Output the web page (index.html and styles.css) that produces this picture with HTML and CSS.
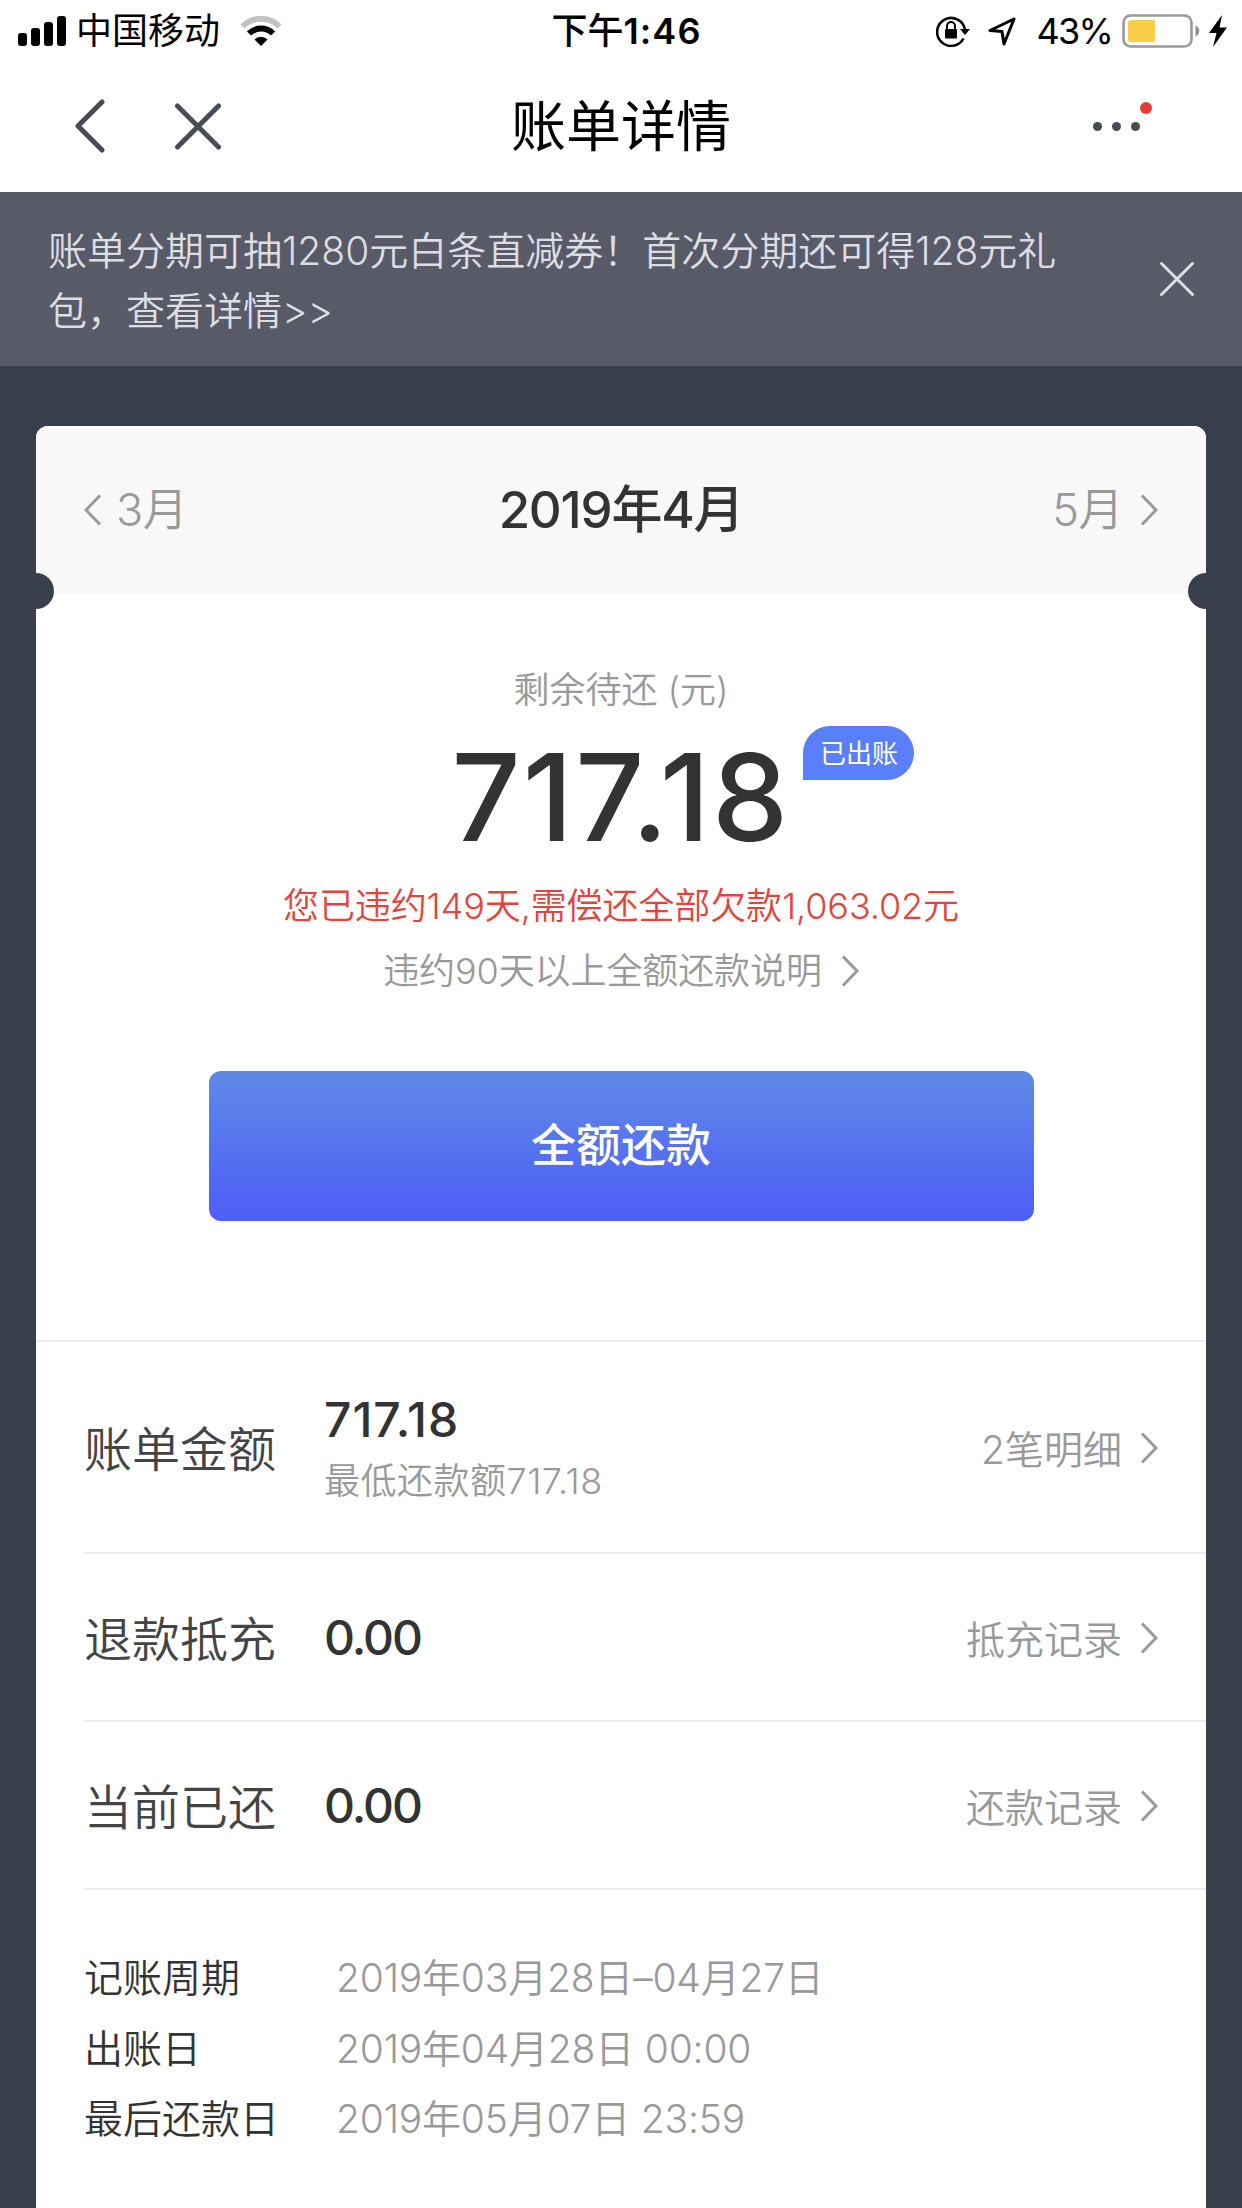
FILE: index.html
```html
<!DOCTYPE html>
<html lang="zh-CN">

<head>
    <meta charset="UTF-8">
    <meta name="viewport" content="width=device-width, initial-scale=1.0">
    <title>账单详情</title>
    <link rel="stylesheet" href="styles.css">
</head>

<body>
    <!-- Status bar -->
    <div class="status-bar">
        <div class="status-left">
            <svg class="signal" width="49" height="30" viewBox="0 0 49 30">
                <rect x="0" y="17" width="9" height="13" rx="3" />
                <rect x="13" y="12" width="9" height="18" rx="3" />
                <rect x="26" y="6" width="9" height="24" rx="3" />
                <rect x="39" y="0" width="9" height="30" rx="3" />
            </svg>
            <span class="carrier">中国移动</span>
            <svg class="wifi" width="42" height="30" viewBox="0 0 42 30">
                <path d="M2.500 10.500a26 26 0 0 1 37 0" fill="none" stroke="#c2c2c2" stroke-width="6" />
                <path d="M9 17.500a17 17 0 0 1 24 0" fill="none" stroke="#000" stroke-width="6" />
                <path d="M14.500 23.500a9.300 9.300 0 0 1 13 0L21 30z" />
            </svg>
        </div>
        <div class="status-time">下午<b>1:46</b></div>
        <div class="status-right">
            <svg class="lock" width="34" height="32" viewBox="0 0 34 32">
                <path d="M27.500 23.500A14 14 0 1 1 29 15" fill="none" stroke="#000" stroke-width="2.600" />
                <path d="M24 14h10l-5 6z" />
                <rect x="9" y="14" width="12" height="9.500" rx="1" />
                <path d="M11 14.500v-3.500a4 4 0 0 1 8 0v3.500" fill="none" stroke="#000" stroke-width="2" />
            </svg>
            <svg class="location" width="28" height="29" viewBox="0 0 28 29">
                <path d="M26 2L2 13.500L14 14.500L16 27z" fill="none" stroke="#000" stroke-width="3" stroke-linejoin="round" />
            </svg>
            <span class="percent">43%</span>
            <svg class="battery" width="78" height="34" viewBox="0 0 78 34">
                <rect x="1.500" y="1.500" width="68" height="31" rx="7" fill="none" stroke="#999" stroke-width="2.600" />
                <path d="M6 9a3 3 0 0 1 3-3h24v22H9a3 3 0 0 1-3-3z" fill="#f7ce46" />
                <path d="M73.500 11.500c5 2 5 9 0 11z" fill="#8e8e8e" />
            </svg>
            <svg class="bolt" width="18" height="32" viewBox="0 0 18 32">
                <path d="M13 0L0 18h7.500L4 32L18 12.500h-7.500z" />
            </svg>
        </div>
    </div>

    <!-- Navigation -->
    <header class="nav">
        <div class="nav-left">
            <svg width="30" height="54" viewBox="0 0 30 54">
                <path d="M27 3L3 27L27 51" />
            </svg>
            <svg width="46" height="47" viewBox="0 0 46 47">
                <path d="M2.500 3L43.500 44M43.500 3L2.500 44" />
            </svg>
        </div>
        <h1>账单详情</h1>
        <div class="nav-more">
            <i></i><i></i><i></i>
            <b class="red-dot"></b>
        </div>
    </header>

    <!-- Notice -->
    <div class="notice">
        <p>账单分期可抽1280元白条直减券！首次分期还可得128元礼包，查看详情&gt;&gt;</p>
        <svg width="34" height="38" viewBox="0 0 34 38">
            <path d="M1.500 3.500L32.500 34.500M32.500 3.500L1.500 34.500" />
        </svg>
    </div>

    <main class="card">
        <div class="month-bar">
            <a class="month prev">
                <svg class="arrow" width="18" height="32" viewBox="0 0 18 32">
                    <path d="M16 1.500L2 16L16 30.500" />
                </svg>
                <span>3月</span>
            </a>
            <h2>2019年4月</h2>
            <a class="month next">
                <span>5月</span>
                <svg class="arrow" width="18" height="32" viewBox="0 0 18 32">
                    <path d="M2 1.500L16 16L2 30.500" />
                </svg>
            </a>
        </div>

        <section class="summary">
            <p class="summary-title">剩余待还 (元)</p>
            <div class="amount">
                <span class="amount-num">717.18</span>
                <span class="tag">已出账</span>
            </div>
            <p class="overdue">您已违约149天,需偿还全部欠款1,063.02元</p>
            <p class="explain">
                <span>违约90天以上全额还款说明</span>
                <svg class="arrow" width="18" height="32" viewBox="0 0 18 32">
                    <path d="M2 1.500L16 16L2 30.500" />
                </svg>
            </p>
            <button class="pay">全额还款</button>
        </section>

        <ul class="rows">
            <li class="row row-tall">
                <span class="label">账单金额</span>
                <div class="value">
                    <strong>717.18</strong>
                    <small>最低还款额717.18</small>
                </div>
                <a class="link">
                    <span>2笔明细</span>
                    <svg class="arrow" width="18" height="32" viewBox="0 0 18 32">
                        <path d="M2 1.500L16 16L2 30.500" />
                    </svg>
                </a>
            </li>
            <li class="row">
                <span class="label">退款抵充</span>
                <div class="value"><strong>0.00</strong></div>
                <a class="link">
                    <span>抵充记录</span>
                    <svg class="arrow" width="18" height="32" viewBox="0 0 18 32">
                        <path d="M2 1.500L16 16L2 30.500" />
                    </svg>
                </a>
            </li>
            <li class="row">
                <span class="label">当前已还</span>
                <div class="value"><strong>0.00</strong></div>
                <a class="link">
                    <span>还款记录</span>
                    <svg class="arrow" width="18" height="32" viewBox="0 0 18 32">
                        <path d="M2 1.500L16 16L2 30.500" />
                    </svg>
                </a>
            </li>
        </ul>

        <dl class="dates">
            <dt>记账周期</dt>
            <dd>2019年03月28日–04月27日</dd>
            <dt>出账日</dt>
            <dd>2019年04月28日 00:00</dd>
            <dt>最后还款日</dt>
            <dd>2019年05月07日 23:59</dd>
        </dl>
    </main>
</body>

</html>
```
FILE: styles.css
```css
* {
    box-sizing: border-box;
    margin: 0;
    padding: 0;
}

body {
    display: flex;
    flex-direction: column;
    height: 2208px;
    overflow: hidden;
    background-color: #3a3f4d;
    color: #333;
    font-family: Inter, "Noto Sans CJK SC", sans-serif;
    font-weight: 350;
}

svg {
    display: block;
    flex: none;
}

h1,
h2,
span,
p {
    white-space: nowrap;
}

/* Status bar */
.status-bar {
    display: grid;
    grid-template-columns: 1fr auto 1fr;
    align-items: center;
    height: 60px;
    padding: 0 15px 0 18px;
    background-color: #fff;
    color: #000;
    font-size: 36px;
    font-weight: 400;
    line-height: 62px;
}

.status-left,
.status-right {
    display: flex;
    align-items: center;
}

.status-right {
    justify-content: flex-end;
}

.carrier {
    margin: 0 20px 0 9px;
}

.status-time {
    margin-left: 8px;
    font-weight: 500;
}

.status-time b {
    font-weight: 600;
    letter-spacing: 1.1px;
}

.location {
    margin: 0 21px 0 18px;
}

.percent {
    margin-right: 10px;
    letter-spacing: -1.8px;
}

.bolt {
    margin-left: 9px;
}

/* Navigation */
.nav {
    display: grid;
    grid-template-columns: 1fr auto 1fr;
    align-items: center;
    height: 132px;
    padding: 0 102px;
    background-color: #fff;
}

.nav-left {
    display: flex;
    align-items: center;
    gap: 70px;
    margin-left: -27px;
}

.nav-left path {
    fill: none;
    stroke: #484c55;
    stroke-width: 5;
    stroke-linecap: round;
    stroke-linejoin: round;
}

.nav h1 {
    padding-bottom: 8px;
    color: #000;
    font-size: 55px;
    font-weight: 400;
}

.nav-more {
    position: relative;
    display: flex;
    justify-content: flex-end;
    gap: 10px;
}

.nav-more i {
    width: 9px;
    height: 9px;
    border-radius: 50%;
    background-color: #484c55;
}

.red-dot {
    position: absolute;
    right: -12px;
    top: -20px;
    width: 12px;
    height: 12px;
    border-radius: 50%;
    background-color: #e33e33;
}

/* Notice */
.notice {
    display: flex;
    align-items: center;
    justify-content: space-between;
    height: 174px;
    padding: 0 48px;
    background-color: #585b67;
    color: #dcdee3;
}

.notice p {
    width: 1020px;
    padding-top: 4px;
    font-size: 39px;
    line-height: 60px;
    white-space: normal;
}

.notice path {
    stroke: #dcdee3;
    stroke-width: 3;
    stroke-linecap: round;
}

/* Bill card */
.card {
    flex: 1;
    margin: 60px 36px 0;
    border-radius: 12px 12px 0 0;
    background-color: #fff;
}

.arrow path {
    fill: none;
    stroke: #999;
    stroke-width: 3;
}

.month-bar {
    position: relative;
    display: grid;
    grid-template-columns: 1fr auto 1fr;
    align-items: center;
    height: 168px;
    padding: 0 48px;
    border-top: 2px solid #fff;
    border-radius: 12px 12px 0 0;
    background-color: #f8f8f8;
}

/* ticket notches */
.month-bar::before,
.month-bar::after {
    content: "";
    position: absolute;
    bottom: -15px;
    width: 18px;
    height: 36px;
    background-color: #3a3f4d;
}

.month-bar::before {
    left: 0;
    border-radius: 0 18px 18px 0;
}

.month-bar::after {
    right: 0;
    border-radius: 18px 0 0 18px;
}

.month {
    display: flex;
    align-items: center;
    color: #999;
    font-size: 45px;
}

.month span {
    padding-bottom: 10px;
    letter-spacing: -0.5px;
}

.month .arrow {
    margin-bottom: 2px;
}

.prev {
    gap: 14px;
}

.next {
    justify-content: flex-end;
    gap: 17px;
}

.month-bar h2 {
    padding-bottom: 10px;
    font-size: 51px;
    font-weight: 500;
    letter-spacing: -1.2px;
}

/* Summary */
.summary {
    display: flex;
    flex-direction: column;
    align-items: center;
    height: 748px;
    padding-top: 66px;
    border-bottom: 2px solid #ececec;
}

.summary-title {
    color: #999;
    font-size: 36px;
    line-height: 60px;
}

.amount {
    position: relative;
    margin-top: 8px;
}

.amount-num {
    display: block;
    font-size: 121px;
    font-weight: 500;
    letter-spacing: 2.2px;
    line-height: 138px;
}

.tag {
    position: absolute;
    left: 100%;
    top: -2px;
    width: 111px;
    height: 54px;
    margin-left: 13px;
    border-radius: 27px 27px 27px 0;
    background-color: #5a7ffb;
    color: #fff;
    font-size: 26px;
    font-weight: 400;
    line-height: 56px;
    text-align: center;
}

.overdue {
    margin-top: 10px;
    color: #e0453c;
    font-size: 36px;
    letter-spacing: -0.1px;
    line-height: 60px;
}

.explain {
    display: flex;
    align-items: center;
    gap: 19px;
    margin-top: 5px;
    color: #999;
    font-size: 36px;
    letter-spacing: -0.1px;
    line-height: 60px;
}

.pay {
    width: 825px;
    height: 150px;
    margin-top: 70px;
    padding-bottom: 8px;
    border: none;
    border-radius: 12px;
    background: linear-gradient(#5e8ae6, #4f5df6);
    color: #fff;
    font-family: inherit;
    font-size: 45px;
    font-weight: 500;
}

/* Detail rows */
.rows {
    margin-left: 48px;
    list-style: none;
}

.row {
    display: flex;
    align-items: center;
    height: 168px;
    padding-right: 48px;
    border-bottom: 2px solid #ececec;
}

.row-tall {
    height: 212px;
}

.label {
    width: 240px;
    padding-bottom: 2px;
    color: #444;
    font-size: 48px;
}

.value {
    display: flex;
    flex: 1;
    flex-direction: column;
    padding-top: 2px;
}

.value strong {
    font-size: 48px;
    font-weight: 500;
    letter-spacing: -2px;
    line-height: 60px;
}

.row-tall .value {
    padding-top: 8px;
}

.row-tall strong {
    letter-spacing: 1px;
}

.value small {
    color: #999;
    font-size: 36px;
    letter-spacing: 0.5px;
    line-height: 62px;
}

.link {
    display: flex;
    align-items: center;
    gap: 18px;
    padding-top: 2px;
    color: #999;
    font-size: 39px;
}

.link span {
    padding-bottom: 3px;
}

/* Dates */
.dates {
    display: grid;
    grid-template-columns: 252px 1fr;
    grid-auto-rows: 70.5px;
    padding: 53px 0 0 48px;
    font-size: 39px;
    line-height: 70px;
}

.dates dd {
    color: #999;
    letter-spacing: -0.2px;
}
```
